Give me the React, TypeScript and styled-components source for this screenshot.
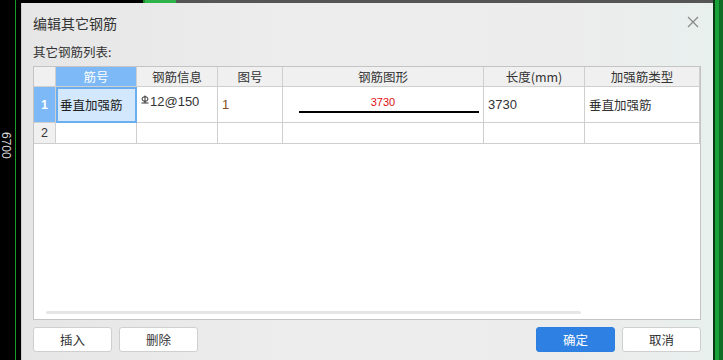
import React from 'react';
import styled, { createGlobalStyle } from 'styled-components';

const GlobalStyle = createGlobalStyle`
  html, body {
    margin: 0;
    padding: 0;
    background: #000;
    font-family: "Noto Sans CJK SC", "Liberation Sans", sans-serif;
    color: #333;
  }
`;

const Stage = styled.div`
  display: flex;
  width: 723px;
  height: 360px;
  overflow: hidden;
`;

const LeftCanvas = styled.div`
  position: relative;
  width: 21px;
  flex: none;
  background: #000;
`;

const GreenLine = styled.div`
  position: absolute;
  left: 15px;
  top: 0;
  bottom: 0;
  width: 1px;
  background: #1c9b2c;
`;

const DimText = styled.div`
  position: absolute;
  left: 0;
  top: 132px;
  writing-mode: vertical-rl;
  color: #d8d8d8;
  font-family: "Liberation Sans", sans-serif;
  font-size: 12px;
  line-height: 12px;
`;

const Middle = styled.div`
  display: flex;
  flex-direction: column;
  width: 692px;
  flex: none;
`;

const TopStrip = styled.div`
  height: 3px;
  flex: none;
  background: linear-gradient(90deg, #000 0 122px, #1d8a2a 122px 124px, #2db34a 124px 155px, #555 155px);
`;

const RightCanvas = styled.div`
  flex: 1;
  background: linear-gradient(90deg, #0a3a14 0 2px, #17a33a 2px 6px, #0f6e26 6px);
`;

const Dialog = styled.div`
  flex: 1;
  display: flex;
  flex-direction: column;
  background: linear-gradient(90deg, #e6e6e6 0%, #ededed 40%, #ececec 80%, #e8f0ee 100%);
  border-left: 1px solid #cfcfcf;
  padding: 0 12px 0 11px;
`;

const TitleBar = styled.div`
  height: 38px;
  display: flex;
  align-items: center;
  justify-content: space-between;
`;

const Title = styled.div`
  font-size: 14px;
  color: #333;
  padding-top: 1px;
`;

const Close = styled.div`
  width: 12px;
  height: 12px;
  margin-right: 2px;
  display: flex;
`;

const ListLabel = styled.div`
  font-size: 12.5px;
  height: 25px;
  line-height: 22px;
  color: #333;
`;

const Table = styled.div`
  height: 254px;
  box-sizing: border-box;
  border: 1px solid #c4c4c4;
  background: #fff;
  position: relative;
`;

const Grid = styled.div`
  display: grid;
  grid-template-columns: 22px 81px 81px 65px 201px 101px 1fr;
  grid-template-rows: 20px 36px 21px;
`;

const HeadCell = styled.div<{ $active?: boolean }>`
  background: ${(p) => (p.$active ? '#7cb9f6' : '#f0f0f0')};
  color: ${(p) => (p.$active ? '#fff' : '#333')};
  border-right: 1px solid #cfcfcf;
  border-bottom: 1px solid #cfcfcf;
  font-size: 12.5px;
  display: flex;
  align-items: center;
  justify-content: center;
  box-sizing: border-box;
`;

const RowHead = styled.div<{ $active?: boolean }>`
  background: ${(p) => (p.$active ? '#7cb9f6' : '#f0f0f0')};
  color: ${(p) => (p.$active ? '#fff' : '#333')};
  border-right: 1px solid #cfcfcf;
  border-bottom: 1px solid #cfcfcf;
  font-family: "Liberation Sans", sans-serif;
  font-size: 12.5px;
  font-weight: ${(p) => (p.$active ? 'bold' : 'normal')};
  display: flex;
  align-items: center;
  justify-content: center;
  box-sizing: border-box;
`;

const Cell = styled.div<{ $selected?: boolean; $top?: boolean }>`
  background: ${(p) => (p.$selected ? '#d3e8fc' : '#fff')};
  border-right: 1px solid #cfcfcf;
  border-bottom: 1px solid #cfcfcf;
  outline: ${(p) => (p.$selected ? '2px solid #6aaef0' : 'none')};
  outline-offset: -2px;
  font-size: 12.5px;
  color: ${(p) => (p.$selected ? '#222' : '#333')};
  display: flex;
  align-items: ${(p) => (p.$top ? 'flex-start' : 'center')};
  padding: ${(p) => (p.$top ? '7px 4px 0' : '0 4px')};
  box-sizing: border-box;
`;

const Num = styled.span<{ $orange?: boolean }>`
  font-family: "Liberation Sans", "Noto Sans", sans-serif;
  font-size: 13px;
  color: ${(p) => (p.$orange ? '#8a4a1a' : '#333')};
`;

const ShapeCell = styled.div`
  border-right: 1px solid #cfcfcf;
  border-bottom: 1px solid #cfcfcf;
  display: flex;
  flex-direction: column;
  align-items: center;
  padding-top: 9px;
  box-sizing: border-box;
`;

const ShapeLabel = styled.div`
  font-family: "Liberation Sans", sans-serif;
  font-size: 11px;
  color: #e01010;
  line-height: 13px;
`;

const ShapeLine = styled.div`
  margin-top: 2px;
  width: 180px;
  height: 2px;
  background: #000;
  margin-left: 11px;
`;

const Scrollbar = styled.div`
  position: absolute;
  left: 12px;
  bottom: 5px;
  width: 535px;
  height: 3px;
  border-radius: 2px;
  background: #e6e6e6;
`;

const Footer = styled.div`
  display: flex;
  align-items: flex-start;
  gap: 7px;
  padding-top: 7px;
  flex: 1;
`;

const Spacer = styled.div`
  flex: 1;
`;

const Button = styled.button<{ $primary?: boolean }>`
  width: 79px;
  height: 25px;
  border-radius: 3px;
  border: 1px solid ${(p) => (p.$primary ? '#2b7fe0' : '#cfcfcf')};
  background: ${(p) => (p.$primary ? '#2e80e2' : '#fff')};
  color: ${(p) => (p.$primary ? '#fff' : '#333')};
  font-family: "Noto Sans CJK SC", sans-serif;
  font-size: 12.5px;
  padding: 0;
`;

const RebarSymbol = () => (
  <svg width="8" height="9" viewBox="0 0 8 9" style={{ marginRight: 1, marginTop: 1 }}>
    <ellipse cx="4" cy="4" rx="3" ry="2.3" fill="none" stroke="#333" strokeWidth="1" />
    <line x1="4" y1="0.5" x2="4" y2="8" stroke="#333" strokeWidth="1" />
    <line x1="0.5" y1="8" x2="7.5" y2="8" stroke="#333" strokeWidth="1" />
  </svg>
);

export default function App() {
  return (
    <>
      <GlobalStyle />
      <Stage>
        <LeftCanvas>
          <GreenLine />
          <DimText>6700</DimText>
        </LeftCanvas>
        <Middle>
          <TopStrip />
          <Dialog>
            <TitleBar>
              <Title>编辑其它钢筋</Title>
              <Close>
                <svg width="12" height="12" viewBox="0 0 12 12">
                  <path d="M1 1 L11 11 M11 1 L1 11" stroke="#8a8a8a" strokeWidth="1.3" />
                </svg>
              </Close>
            </TitleBar>
            <ListLabel>其它钢筋列表:</ListLabel>
            <Table>
              <Grid>
                <HeadCell />
                <HeadCell $active>筋号</HeadCell>
                <HeadCell>钢筋信息</HeadCell>
                <HeadCell>图号</HeadCell>
                <HeadCell>钢筋图形</HeadCell>
                <HeadCell>长度(mm)</HeadCell>
                <HeadCell>加强筋类型</HeadCell>

                <RowHead $active>1</RowHead>
                <Cell $selected>垂直加强筋</Cell>
                <Cell $top>
                  <RebarSymbol />
                  <Num>12@150</Num>
                </Cell>
                <Cell>
                  <Num $orange>1</Num>
                </Cell>
                <ShapeCell>
                  <ShapeLabel>3730</ShapeLabel>
                  <ShapeLine />
                </ShapeCell>
                <Cell>
                  <Num>3730</Num>
                </Cell>
                <Cell>垂直加强筋</Cell>

                <RowHead>2</RowHead>
                <Cell />
                <Cell />
                <Cell />
                <Cell />
                <Cell />
                <Cell />
              </Grid>
              <Scrollbar />
            </Table>
            <Footer>
              <Button>插入</Button>
              <Button>删除</Button>
              <Spacer />
              <Button $primary>确定</Button>
              <Button>取消</Button>
            </Footer>
          </Dialog>
        </Middle>
        <RightCanvas />
      </Stage>
    </>
  );
}
